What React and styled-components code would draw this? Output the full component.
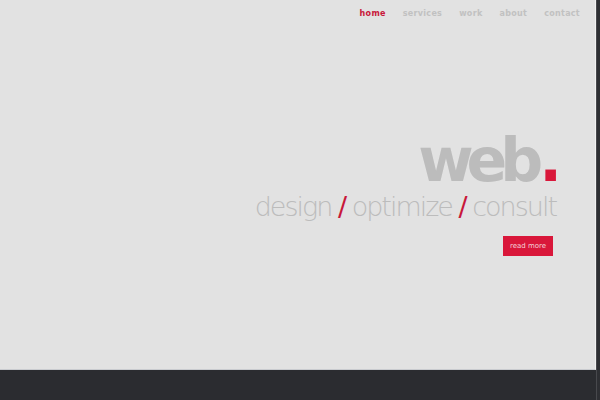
import React from 'react';
import styled, { createGlobalStyle } from 'styled-components';

const GlobalStyle = createGlobalStyle`
  html, body {
    margin: 0;
    padding: 0;
    background: #2b2c30;
    font-family: "DejaVu Sans", Verdana, sans-serif;
  }
`;

const Page = styled.div`
  display: flex;
  align-items: stretch;
`;

const Main = styled.main`
  flex: 1;
  min-width: 0;
`;

const Rail = styled.div`
  width: 3px;
  background: #2e2f33;
  border-left: 1px solid #48494d;
`;

const Hero = styled.section`
  height: 369px;
  background: #e2e2e2;
  border-bottom: 1px solid #c9cbcf;
  border-right: 1px solid #f1f1f1;
  display: flex;
  flex-direction: column;
`;

const Nav = styled.nav`
  display: flex;
  justify-content: flex-end;
  gap: 17px;
  padding: 9px 15px 0 0;
`;

const NavLink = styled.a`
  font-size: 8px;
  font-weight: bold;
  letter-spacing: 0.3px;
  color: ${p => (p.$active ? '#c8173a' : '#c1c1c1')};
  text-decoration: none;
`;

const Content = styled.div`
  display: flex;
  flex-direction: column;
  align-items: flex-end;
  padding: 115px 39px 0 0;
`;

const Title = styled.h1`
  margin: 0 -6px 0 0;
  font-size: 60px;
  font-weight: bold;
  letter-spacing: -7px;
  line-height: 54px;
  color: #bcbcbc;
`;

const Dot = styled.span`
  color: #d9173a;
  letter-spacing: 0;
  margin-left: 3px;
`;

const Tagline = styled.p`
  margin: 4px 0 0;
  font-size: 27px;
  font-weight: 200;
  color: #bcbcbc;
  letter-spacing: -2px;
  line-height: 32px;
`;

const Slash = styled.span`
  color: #c8173a;
  font-weight: 400;
`;

const Button = styled.a`
  margin: 13px 3px 0 0;
  width: 50px;
  height: 20px;
  display: flex;
  align-items: center;
  justify-content: center;
  background: #d9173a;
  color: #f4d3d9;
  font-size: 7px;
  text-decoration: none;
`;

const Dark = styled.section`
  height: 300px;
  background: #2b2c30;
`;

const links = ['home', 'services', 'work', 'about', 'contact'];

export default function App() {
  return (
    <>
      <GlobalStyle />
      <Page>
        <Main>
          <Hero>
            <Nav>
              {links.map((l, i) => (
                <NavLink key={l} href="#" $active={i === 0}>{l}</NavLink>
              ))}
            </Nav>
            <Content>
              <Title>web<Dot>.</Dot></Title>
              <Tagline>
                design <Slash>/</Slash> optimize <Slash>/</Slash> consult
              </Tagline>
              <Button href="#">read more</Button>
            </Content>
          </Hero>
          <Dark />
        </Main>
        <Rail />
      </Page>
    </>
  );
}
